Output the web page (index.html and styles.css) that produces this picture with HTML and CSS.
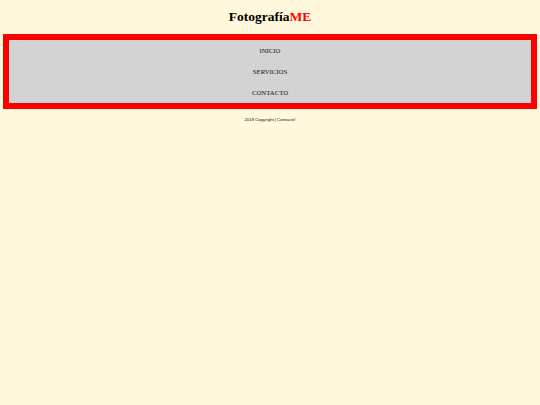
FILE: index.html
```html
<!DOCTYPE html>
<html lang="es">
<head>
<meta charset="utf-8">
<title>FotografíaME</title>
<link rel="stylesheet" href="styles.css">
</head>
<body>
<header class="site-header">
  <h1 class="brand">Fotografía<span class="brand-accent">ME</span></h1>
</header>
<nav class="main-nav">
  <ul class="nav-list">
    <li class="nav-item"><a class="nav-link" href="#">INICIO</a></li>
    <li class="nav-item"><a class="nav-link" href="#">SERVICIOS</a></li>
    <li class="nav-item"><a class="nav-link" href="#">CONTACTO</a></li>
  </ul>
</nav>
<footer class="site-footer">2018 Copyright | Contacto!</footer>
</body>
</html>
```
FILE: styles.css
```css
html {
  background: #fff8dc;
}
body {
  margin: 0;
  padding: 0 3.4px 3.4px;
  background: #fff8dc;
  font-family: "Liberation Serif", "Times New Roman", serif;
  color: #000;
}
.site-header {
  padding-top: 9px;
  padding-bottom: 9px;
  text-align: center;
}
.brand {
  margin: 0;
  font-size: 13.5px;
  line-height: 15.6px;
  font-weight: bold;
}
.brand-accent {
  color: #ff0000;
}
.main-nav {
  border: 6.5px solid #ff0000;
  background: #d3d3d3;
}
.nav-list {
  list-style: none;
  margin: 0;
  padding: 0;
  display: flex;
  flex-direction: column;
}
.nav-item {
  height: 21.3px;
  display: flex;
  align-items: center;
  justify-content: center;
}
.nav-link {
  font-size: 6.75px;
  color: #111;
  text-decoration: none;
}
.site-footer {
  margin-top: 8px;
  text-align: center;
  font-family: "Liberation Sans", Arial, sans-serif;
  font-size: 4.3px;
  line-height: 5px;
  color: #111;
}
```
